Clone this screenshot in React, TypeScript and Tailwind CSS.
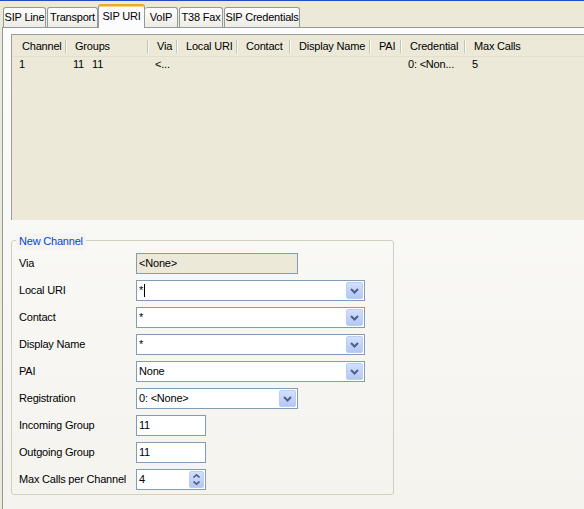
import React from 'react';

const font = { fontFamily: '"Liberation Sans", Arial, sans-serif' };

interface Col {
  label: string;
  width: number;
}

const columns: Col[] = [
  { label: 'Channel', width: 54 },
  { label: 'Groups', width: 82 },
  { label: 'Via', width: 29 },
  { label: 'Local URI', width: 60 },
  { label: 'Contact', width: 53 },
  { label: 'Display Name', width: 80 },
  { label: 'PAI', width: 31 },
  { label: 'Credential', width: 64 },
  { label: 'Max Calls', width: 110 },
];

function Chevron() {
  return (
    <svg width="9" height="6" viewBox="0 0 9 6" className="block">
      <path d="M1 1 L4.5 4.5 L8 1" fill="none" stroke="#4d6185" strokeWidth="2" />
    </svg>
  );
}

function DropButton() {
  return (
    <div className="w-[17px] h-[17px] mr-px rounded-[2px] border border-[#bccdf5] bg-gradient-to-b from-[#d3e0fd] to-[#b3c7f5] flex items-center justify-center">
      <Chevron />
    </div>
  );
}

function Combo({ value, width, caret }: { value: string; width: string; caret?: boolean }) {
  return (
    <div className={`${width} h-[21px] border border-[#7f9db9] bg-white flex items-center justify-between`}>
      <span className="pl-[2px] flex items-center">
        {value}
        {caret && <span className="inline-block w-px h-[13px] bg-black ml-px" />}
      </span>
      <DropButton />
    </div>
  );
}

function TextBox({ value }: { value: string }) {
  return (
    <div className="w-[70px] h-[21px] border border-[#7f9db9] bg-white flex items-center pl-[2px]">
      {value}
    </div>
  );
}

function Spinner({ value }: { value: string }) {
  return (
    <div className="w-[70px] h-[21px] border border-[#7f9db9] bg-white flex items-center justify-between pl-[2px]">
      <span>{value}</span>
      <div className="w-[15px] h-[17px] mr-px rounded-[2px] border border-[#bccdf5] bg-gradient-to-b from-[#d3e0fd] to-[#b3c7f5] flex flex-col items-center justify-center gap-[3px]">
        <svg width="7" height="4" viewBox="0 0 7 4" className="block">
          <path d="M0.5 3.5 L3.5 0.8 L6.5 3.5" fill="none" stroke="#4d6185" strokeWidth="1.6" />
        </svg>
        <svg width="7" height="4" viewBox="0 0 7 4" className="block">
          <path d="M0.5 0.5 L3.5 3.2 L6.5 0.5" fill="none" stroke="#4d6185" strokeWidth="1.6" />
        </svg>
      </div>
    </div>
  );
}

function FormRow({ label, children }: { label: string; children: React.ReactNode }) {
  return (
    <div className="flex items-center h-[21px]">
      <span className="w-[117px] shrink-0 whitespace-nowrap">{label}</span>
      {children}
    </div>
  );
}

function Tab({ label, width, selected, noLeft, className }: { label: string; width: string; selected?: boolean; noLeft?: boolean; className?: string }) {
  if (selected) {
    return (
      <div className={`${width} ${className ?? ''} h-[24px] -mb-px relative z-10 rounded-t-[3px] border-x border-[#919b9c] border-t-2 border-t-[#f5a331] bg-[#fcfcfe] flex items-center justify-center pb-[2px] whitespace-nowrap shadow-[inset_0_1px_0_#ffd37a]`}>
        {label}
      </div>
    );
  }
  return (
    <div className={`${width} ${className ?? ''} h-[20px] shrink-0 rounded-t-[3px] border border-b-0 border-[#919b9c] ${noLeft ? 'border-l-0' : ''} bg-gradient-to-b from-white to-[#ecebe5] flex items-center justify-center whitespace-nowrap overflow-hidden`}>
      {label}
    </div>
  );
}

export default function App() {
  return (
    <div className="w-[584px] h-[509px] overflow-hidden bg-[#ece9d8] border-t border-[#1f4fc2] text-[11px] tracking-[-0.2px] text-black flex flex-col" style={font}>
      {/* tab strip */}
      <div className="flex items-end h-[26px] pl-[3px]">
        <Tab label="SIP Line" width="w-[43px]" />
        <Tab label="Transport" width="w-[51px]" className="ml-px" />
        <Tab label="SIP URI" width="w-[47px]" selected />
        <Tab label="VoIP" width="w-[33px]" noLeft />
        <Tab label="T38 Fax" width="w-[44px]" className="ml-px" />
        <Tab label="SIP Credentials" width="w-[76px]" className="ml-px" />
      </div>

      {/* tab panel */}
      <div className="flex-1 ml-[2px] border-l border-t border-[#919b9c] bg-gradient-to-b from-[#fcfcfb] to-[#f4f3ee] flex flex-col">
        {/* channel list */}
        <div className="ml-[8px] mt-[6px] h-[186px] border-l border-t border-[#9d9c96] bg-[#ece9d8]">
          <div className="flex items-center h-[21px] mt-px border-b border-[#e2dfcd]">
            {columns.map((c, i) => (
              <div key={c.label} className="flex items-center h-full shrink-0" style={{ width: c.width }}>
                {i > 0 && <span className="w-[2px] h-[13px] border-l border-[#c7c5b2] bg-white/60 -ml-px" />}
                <span className={i > 0 ? 'pl-[8px] whitespace-nowrap' : 'pl-[10px] whitespace-nowrap'}>{c.label}</span>
              </div>
            ))}
          </div>
          <div className="flex items-center h-[14px]">
            <div className="w-[54px] pl-[7px]">1</div>
            <div className="w-[82px] pl-[7px] flex gap-[8px]">
              <span>11</span>
              <span>11</span>
            </div>
            <div className="w-[29px] pl-[7px]">&lt;...</div>
            <div className="w-[60px]" />
            <div className="w-[53px]" />
            <div className="w-[80px]" />
            <div className="w-[31px]" />
            <div className="w-[64px] pl-[7px] whitespace-nowrap">0: &lt;Non...</div>
            <div className="pl-[7px]">5</div>
          </div>
        </div>

        {/* new channel group */}
        <div className="relative ml-[8px] mt-[20px] w-[383px] h-[255px] border border-[#d0d0bf] rounded-[3px] pt-[12px] pl-[7px] flex flex-col gap-[6px]">
          <span className="absolute -top-[8px] left-[4px] px-[3px] bg-[#f5f4f0] text-[#0046d5]">New Channel</span>
          <FormRow label="Via">
            <div className="w-[162px] h-[21px] border border-[#7f9db9] bg-[#ece9d8] flex items-center pl-[2px]">&lt;None&gt;</div>
          </FormRow>
          <FormRow label="Local URI">
            <Combo value="*" width="w-[229px]" caret />
          </FormRow>
          <FormRow label="Contact">
            <Combo value="*" width="w-[229px]" />
          </FormRow>
          <FormRow label="Display Name">
            <Combo value="*" width="w-[229px]" />
          </FormRow>
          <FormRow label="PAI">
            <Combo value="None" width="w-[229px]" />
          </FormRow>
          <FormRow label="Registration">
            <Combo value="0: <None>" width="w-[162px]" />
          </FormRow>
          <FormRow label="Incoming Group">
            <TextBox value="11" />
          </FormRow>
          <FormRow label="Outgoing Group">
            <TextBox value="11" />
          </FormRow>
          <FormRow label="Max Calls per Channel">
            <Spinner value="4" />
          </FormRow>
        </div>
      </div>
    </div>
  );
}
